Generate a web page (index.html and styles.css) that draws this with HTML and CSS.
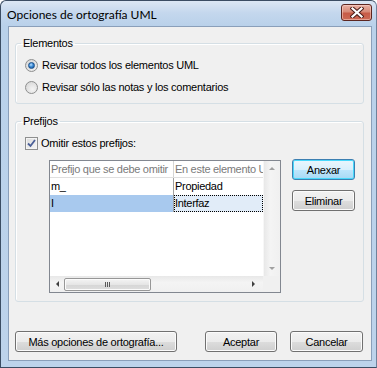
FILE: index.html
```html
<!DOCTYPE html>
<html lang="es">
<head>
    <meta charset="UTF-8">
    <title>Opciones de ortografía UML</title>
    <link rel="stylesheet" href="styles.css">
</head>
<body>
    <div class="window">
        <div class="titlebar">
            <span class="title">Opciones de ortografía UML</span>
            <div class="close-btn">
                <svg width="14" height="11" viewBox="0 0 14 11">
                    <path d="M2.5 1.5 L11.5 9.5 M11.5 1.5 L2.5 9.5" stroke="#4a1d18" stroke-width="4.2" stroke-linecap="square"/>
                    <path d="M2.5 1.5 L11.5 9.5 M11.5 1.5 L2.5 9.5" stroke="#ffffff" stroke-width="2.2" stroke-linecap="square"/>
                </svg>
            </div>
        </div>

        <div class="client">
            <!-- Elementos -->
            <fieldset class="group group-elementos">
                <legend>Elementos</legend>
                <label class="option"><span class="radio checked"></span>Revisar todos los elementos UML</label>
                <label class="option"><span class="radio"></span>Revisar sólo las notas y los comentarios</label>
            </fieldset>

            <!-- Prefijos -->
            <fieldset class="group group-prefijos">
                <legend>Prefijos</legend>
                <label class="option">
                    <span class="checkbox">
                        <svg width="9" height="9" viewBox="0 0 9 9">
                            <path d="M1 4.5 L3.5 7 L8 1" fill="none" stroke="#4a5f97" stroke-width="1.8"/>
                        </svg>
                    </span>Omitir estos prefijos:
                </label>

                <div class="prefix-row">
                    <div class="grid">
                        <div class="grid-top">
                            <div class="grid-body">
                                <div class="grid-row header">
                                    <div class="cell c1">Prefijo que se debe omitir</div>
                                    <div class="cell c2">En este elemento UML</div>
                                </div>
                                <div class="grid-row">
                                    <div class="cell c1">m_</div>
                                    <div class="cell c2">Propiedad</div>
                                </div>
                                <div class="grid-row selected">
                                    <div class="cell c1">I</div>
                                    <div class="cell c2"><span class="focus">Interfaz</span></div>
                                </div>
                            </div>
                            <div class="vscroll">
                                <span class="arrow up"></span>
                                <span class="arrow down"></span>
                            </div>
                        </div>
                        <div class="grid-bottom">
                            <div class="hscroll">
                                <span class="arrow left"></span>
                                <div class="thumb"><span class="grip"></span></div>
                                <span class="arrow right"></span>
                            </div>
                            <div class="corner"></div>
                        </div>
                    </div>

                    <div class="side-buttons">
                        <button class="btn default">Anexar</button>
                        <button class="btn">Eliminar</button>
                    </div>
                </div>
            </fieldset>

            <div class="footer">
                <button class="btn btn-more">Más opciones de ortografía...</button>
                <div class="footer-right">
                    <button class="btn btn-ok">Aceptar</button>
                    <button class="btn btn-cancel">Cancelar</button>
                </div>
            </div>
        </div>
    </div>
</body>
</html>
```

FILE: styles.css
```css
body {
    margin: 0;
    background-color: #ffffff;
    font-family: 'Liberation Sans', Arial, sans-serif;
    font-size: 11px;
    letter-spacing: -0.25px;
    color: #000000;
}
.window {
    width: 377px;
    height: 368px;
    box-sizing: border-box;
    border: 1px solid #3b4d63;
    border-right-color: #6f829a;
    border-radius: 6px 6px 0 0;
    background: linear-gradient(#dce7f4 0px, #c4d7ed 12px, #b9d1ea 25px, #bdd3eb 100%);
    padding: 0 4px 6px 7px;
    display: flex;
    flex-direction: column;
}
.titlebar {
    height: 25px;
    display: flex;
    justify-content: space-between;
    align-items: flex-start;
}
.title {
    font-family: 'Lato', 'Liberation Sans', sans-serif;
    font-size: 12px;
    letter-spacing: 0;
    color: #000000;
    margin-top: 6px;
    margin-left: -1px;
    line-height: 15px;
}
.close-btn {
    width: 29px;
    height: 15px;
    margin-top: 3px;
    border: 1px solid #5c2620;
    border-radius: 3px;
    background: linear-gradient(#e8b0a3 0%, #d78a77 45%, #c75b47 55%, #cc6a55 100%);
    box-shadow: inset 0 0 0 1px rgba(255, 220, 210, 0.5);
    display: flex;
    justify-content: center;
    align-items: center;
}
.client {
    flex: 1;
    border: 1px solid #8a9fba;
    background-color: #f0f0f0;
    display: flex;
    flex-direction: column;
}
.group {
    border: 1px solid #d5dfe5;
    border-radius: 3px;
    box-shadow: inset 1px 1px 0 #ffffff;
    margin: 0 7px 0 6px;
    padding: 4px 7px 5px 9px;
    min-width: 0;
}
.group legend {
    padding: 0 2px;
    margin-left: -4px;
    line-height: 13px;
}
.group-elementos {
    margin-top: 10px;
}
.group-prefijos {
    margin-top: 11px;
    padding-bottom: 8px;
}
.option {
    display: flex;
    align-items: center;
    height: 22px;
}
.radio {
    width: 11px;
    height: 11px;
    border: 1px solid #8e8f8f;
    border-radius: 50%;
    background: radial-gradient(circle at 60% 65%, #f4f4f4 0%, #dcdcdc 70%, #cbcbcb 100%);
    margin-right: 4px;
    display: flex;
    justify-content: center;
    align-items: center;
}
.radio.checked::after {
    content: '';
    width: 5px;
    height: 5px;
    border-radius: 50%;
    border: 0.5px solid #1a4f8a;
    background: radial-gradient(circle at 40% 35%, #bfe2ff 0%, #3b8bd6 45%, #0d4a8a 100%);
}
.checkbox {
    width: 11px;
    height: 11px;
    border: 1px solid #8e8f8f;
    background: linear-gradient(135deg, #dcdcdc, #f6f6f6);
    box-shadow: inset 0 0 0 1px #f4f4f4;
    margin-right: 3px;
    display: flex;
    justify-content: center;
    align-items: center;
}
.prefix-row {
    display: flex;
    align-items: flex-start;
    margin-top: 6px;
    margin-left: 24px;
}
.grid {
    width: 232px;
    height: 133px;
    box-sizing: border-box;
    border: 1px solid #828790;
    background-color: #ffffff;
    display: flex;
    flex-direction: column;
}
.grid-top {
    flex: 1;
    display: flex;
    min-height: 0;
}
.grid-body {
    flex: 1;
    overflow: hidden;
}
.grid-row {
    display: flex;
    height: 17px;
    line-height: 17px;
}
.grid-row.header {
    height: 16px;
    line-height: 16px;
    color: #7a7a7a;
    border-bottom: 1px solid #e0e0e0;
}
.cell {
    padding-left: 1px;
    white-space: nowrap;
    overflow: hidden;
    box-sizing: border-box;
    letter-spacing: -0.3px;
}
.cell.c1 {
    width: 124px;
    border-right: 1px solid #a0a0a0;
}
.header .cell.c1 {
    border-right-color: #d5d5d5;
}
.cell.c2 {
    flex: 1;
}
.grid-row.selected .c1 {
    background-color: #a8c9ee;
}
.grid-row.selected .c2 {
    background-color: #e1ecf8;
    padding: 0;
}
.focus {
    display: block;
    height: 17px;
    box-sizing: border-box;
    border: 1px dotted #000000;
    line-height: 15px;
    padding-left: 0;
}
.vscroll {
    width: 17px;
    background: linear-gradient(90deg, #e8e8e8, #f4f4f4 40%, #f0f0f0);
    border-left: 1px solid #f7f7f7;
    display: flex;
    flex-direction: column;
    justify-content: space-between;
    align-items: center;
    padding: 6px 0 6px;
    box-sizing: border-box;
}
.arrow {
    width: 0;
    height: 0;
    border: 3px solid transparent;
}
.arrow.up {
    border-bottom: 3px solid #a0a0a0;
    border-top-width: 0;
}
.arrow.down {
    border-top: 3px solid #a0a0a0;
    border-bottom-width: 0;
}
.arrow.left {
    border-right: 3px solid #404040;
    border-left-width: 0;
}
.arrow.right {
    border-left: 3px solid #404040;
    border-right-width: 0;
}
.grid-bottom {
    height: 16px;
    display: flex;
}
.hscroll {
    flex: 1;
    display: flex;
    align-items: center;
    background: linear-gradient(#e8e8e8, #f4f4f4 40%, #f0f0f0);
    padding: 0 8px 0 6px;
}
.thumb {
    width: 87px;
    height: 13px;
    box-sizing: border-box;
    margin-left: 5px;
    margin-right: auto;
    border: 1px solid #979797;
    border-radius: 2px;
    background: linear-gradient(#f4f4f4, #e6e6e6 50%, #d6d6d6 51%, #dedede);
    box-shadow: inset 0 0 0 1px #fbfbfb;
    display: flex;
    justify-content: center;
    align-items: center;
}
.grip {
    width: 6px;
    height: 5px;
    background: repeating-linear-gradient(90deg, #5a5a5a 0, #5a5a5a 1px, transparent 1px, transparent 2px);
}
.corner {
    width: 17px;
    background-color: #f0f0f0;
}
.side-buttons {
    display: flex;
    flex-direction: column;
    gap: 10px;
    margin-left: 11px;
    margin-top: -1px;
}
.btn {
    height: 21px;
    box-sizing: border-box;
    border: 1px solid #707070;
    border-radius: 3px;
    background: linear-gradient(#f2f2f2 0%, #ebebeb 50%, #dddddd 51%, #cfcfcf 100%);
    box-shadow: inset 0 0 0 1px #fbfbfb;
    font-family: 'Liberation Sans', Arial, sans-serif;
    font-size: 11px;
    letter-spacing: -0.25px;
    color: #000000;
    padding: 0;
}
.side-buttons .btn {
    width: 63px;
}
.btn.default {
    border-color: #3c7fb1;
    background: linear-gradient(#eaf6fd 0%, #d9f0fc 50%, #bee6fd 51%, #a7d9f5 100%);
    box-shadow: inset 0 0 0 1px #48d8fb;
}
.footer {
    display: flex;
    justify-content: space-between;
    margin: auto 8px 8px 6px;
}
.btn-more {
    width: 162px;
}
.footer-right {
    display: flex;
    gap: 13px;
}
.btn-ok {
    width: 72px;
}
.btn-cancel {
    width: 73px;
}
```
